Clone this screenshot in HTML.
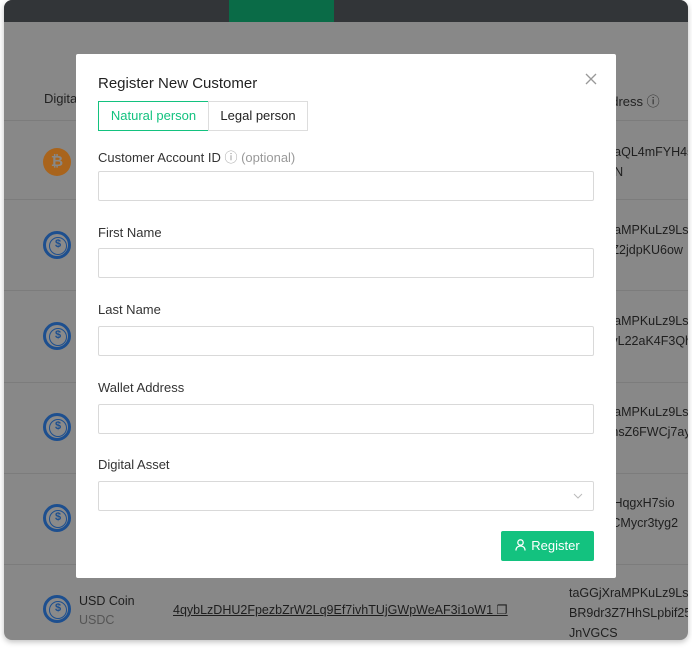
<!DOCTYPE html>
<html><head><style>
*{box-sizing:border-box;margin:0;padding:0}
body{width:692px;height:649px;background:#fff;font-family:"Liberation Sans","DejaVu Sans",sans-serif;position:relative;overflow:hidden}
.card{position:absolute;left:4px;top:0;width:684px;height:640px;background:#888;border-radius:8px;overflow:hidden;box-shadow:0 2px 6px rgba(0,0,0,.25)}
.top{position:absolute;left:0;top:0;width:684px;height:22px;background:#323538}
.tab{position:absolute;left:225px;top:0;width:105px;height:22px;background:#0a6b47}
.hdr{position:absolute;left:40px;top:91px;font-size:13px;color:#222}
.hdr2{position:absolute;left:600px;top:91px;font-size:13px;color:#222}
.line{position:absolute;left:0;width:684px;height:1px;background:#7c7c7c}
.ico{position:absolute;left:39px;width:28px;height:28px;border-radius:50%}
.usd{border:3px solid #1d4f8f;background:#8a8a8a}
.usd::after{content:"$";position:absolute;left:3px;top:3px;width:16px;height:16px;border:1.5px solid #1d4f8f;border-radius:50%;font-size:11px;line-height:13px;text-align:center;color:#1d4f8f;font-weight:bold}
.btc{background:#a9641c;color:#888;font-weight:bold;font-size:15px;text-align:center;line-height:28px}
.t{position:absolute;font-size:12.5px;color:#1e1e1e;line-height:20px}
.modal{position:absolute;left:76px;top:54px;width:540px;height:524px;background:#fff;border-radius:2px}
.title{position:absolute;left:22px;top:21px;font-size:15px;color:#222}
.lbl{position:absolute;left:22px;font-size:13px;color:#333}
.seg{position:absolute;top:47px;height:30px;font-size:13px;line-height:28px;text-align:center;border:1px solid #ddd}
.inp{position:absolute;left:22px;width:496px;height:30px;border:1px solid #d9d9d9;border-radius:2px}
.btn{position:absolute;left:425px;top:477px;width:93px;height:30px;background:#13c27f;border-radius:2px;color:#fff;font-size:13px;line-height:30px;text-align:center}
</style></head><body>
<div class="card">
<div class="top"></div><div class="tab"></div>
<div class="hdr">Digita</div><div class="hdr2">ddress ⓘ</div>
<div class="line" style="top:120px"></div>
<div class="line" style="top:199px"></div>
<div class="line" style="top:290px"></div>
<div class="line" style="top:382px"></div>
<div class="line" style="top:473px"></div>
<div class="line" style="top:564px"></div>
<div class="ico btc" style="top:148px">₿</div>
<div class="ico usd" style="top:231px"></div>
<div class="ico usd" style="top:322px"></div>
<div class="ico usd" style="top:413px"></div>
<div class="ico usd" style="top:504px"></div>
<div class="ico usd" style="top:595px"></div>
<div class="t" style="left:565px;top:142px">taGGjXraQL4mFYH4sR<br>BR9dr6jN</div>
<div class="t" style="left:565px;top:220px">taGGjXraMPKuLz9LsU<br>BR9dr3Z2jdpKU6ow</div>
<div class="t" style="left:565px;top:311px">taGGjXraMPKuLz9LsU<br>BR9dr3vL22aK4F3Qh</div>
<div class="t" style="left:565px;top:402px">taGGjXraMPKuLz9LsU<br>BR9dr3hsZ6FWCj7ay</div>
<div class="t" style="left:565px;top:493px">taGGjXtHqgxH7sio<br>BR9draCMycr3tyg2</div>
<div class="t" style="left:565px;top:583px">taGGjXraMPKuLz9LsU<br>BR9dr3Z7HhSLpbif25<br>JnVGCS</div>
<div class="t" style="left:75px;top:591px">USD Coin</div>
<div class="t" style="left:75px;top:610px;color:#555">USDC</div>
<div class="t" style="left:169px;top:600px;text-decoration:underline">4qybLzDHU2FpezbZrW2Lq9Ef7ivhTUjGWpWeAF3i1oW1 ❐</div>
</div>
<div class="modal">
<div class="title">Register New Customer</div>
<svg style="position:absolute;left:509px;top:19px" width="12" height="12" viewBox="0 0 12 12"><path d="M1 1L11 11M11 1L1 11" stroke="#999" stroke-width="1.3"/></svg>
<div class="seg" style="left:22px;width:111px;border-color:#13c27f;color:#13c27f">Natural person</div>
<div class="seg" style="left:132px;width:100px;color:#222">Legal person</div>
<div class="lbl" style="top:93px">Customer Account ID <span style="color:#999">ⓘ (optional)</span></div>
<div class="inp" style="top:117px"></div>
<div class="lbl" style="top:171px">First Name</div>
<div class="inp" style="top:194px"></div>
<div class="lbl" style="top:248px">Last Name</div>
<div class="inp" style="top:272px"></div>
<div class="lbl" style="top:326px">Wallet Address</div>
<div class="inp" style="top:350px"></div>
<div class="lbl" style="top:403px">Digital Asset</div>
<div class="inp" style="top:427px"><svg style="position:absolute;right:10px;top:11px" width="10" height="6" viewBox="0 0 10 6"><path d="M1 1L5 5L9 1" stroke="#bbb" fill="none"/></svg></div>
<div class="btn"><svg width="11" height="12" viewBox="0 0 11 12" style="vertical-align:-1px;margin-right:5px"><circle cx="5.5" cy="3.5" r="2.7" stroke="#fff" fill="none" stroke-width="1.3"/><path d="M1 11.5C1 8.5 3 7 5.5 7S10 8.5 10 11.5" stroke="#fff" fill="none" stroke-width="1.3"/></svg>Register</div>
</div>
</body></html>
